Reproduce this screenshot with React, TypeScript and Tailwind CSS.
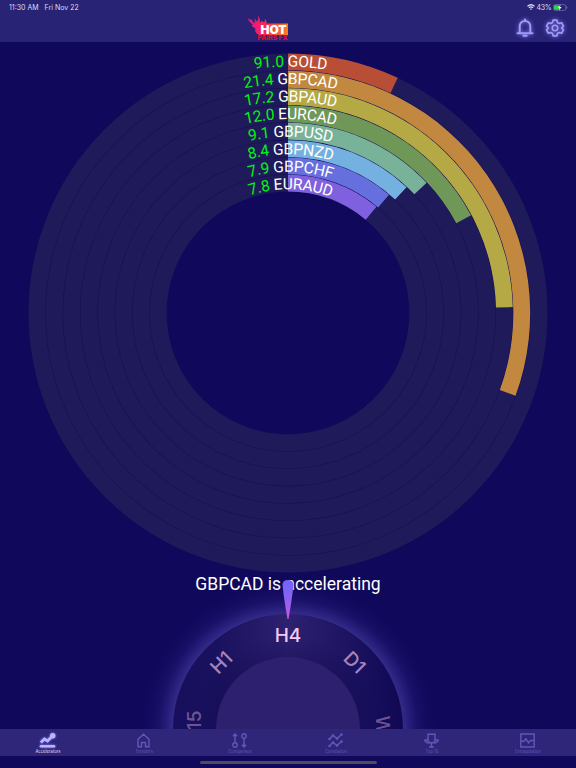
import type { ReactNode } from "react";

type Pair = { name: string; value: string; angle: number; color: string };

const pairs: Pair[] = [
  { name: "GOLD", value: "91.0", angle: 25, color: "#b94e36" },
  { name: "GBPCAD", value: "21.4", angle: 110, color: "#c2883f" },
  { name: "GBPAUD", value: "17.2", angle: 88.5, color: "#b5a945" },
  { name: "EURCAD", value: "12.0", angle: 61.9, color: "#6f9858" },
  { name: "GBPUSD", value: "9.1", angle: 46.8, color: "#78b298" },
  { name: "GBPNZD", value: "8.4", angle: 43.3, color: "#74b1e0" },
  { name: "GBPCHF", value: "7.9", angle: 40.5, color: "#666fde" },
  { name: "EURAUD", value: "7.8", angle: 39.8, color: "#7f60de" },
];

const C = 260;
const OUTER = 259.5;
const STEP = 17.33;
const THICK = 16.8;

// arc band starting from 12 o'clock, clockwise
function band(r1: number, r2: number, deg: number) {
  const a = (deg * Math.PI) / 180;
  const s = Math.sin(a);
  const c = Math.cos(a);
  return `M${C} ${C - r1}A${r1} ${r1} 0 0 1 ${C + r1 * s} ${C - r1 * c}L${C + r2 * s} ${C - r2 * c}A${r2} ${r2} 0 0 0 ${C} ${C - r2}Z`;
}

function RadialChart() {
  return (
    <svg width="520" height="520" viewBox="0 0 520 520" className="block shrink-0">
      <circle cx={C} cy={C} r={190.2} fill="none" stroke="#170f59" strokeWidth="138" />
      {pairs.map((p, i) => {
        const r = OUTER - i * STEP;
        return (
          <g key={p.name}>
            <circle cx={C} cy={C} r={r - THICK / 2} fill="none" stroke="#1f1a59" strokeWidth={THICK} />
            <path d={band(r, r - THICK, p.angle)} fill={p.color} />
          </g>
        );
      })}
      {pairs.map((p, i) => {
        const r = OUTER - i * (STEP + 0.2) - 13.1;
        // labels sit slightly past 12 o'clock
        const t = 2.6 / r;
        const dx = r * Math.cos(t);
        const dy = r * Math.sin(t);
        return (
          <g key={p.name}>
            <path id={`arc-${p.name}`} d={`M${C - dx} ${C - dy}A${r} ${r} 0 0 1 ${C + dx} ${C + dy}`} fill="none" />
            <text className="font-['Roboto',sans-serif] text-[15.600px] tracking-[-0.220px]" textAnchor="middle" fill="#fff">
              <textPath href={`#arc-${p.name}`} startOffset="50%">
                <tspan fill="#00f514">{p.value}</tspan> {p.name}
              </textPath>
            </text>
          </g>
        );
      })}
    </svg>
  );
}

const frames = [
  { label: "M15", rot: -90, opacity: 0.4 },
  { label: "H1", rot: -45, opacity: 0.65 },
  { label: "H4", rot: 0, opacity: 1 },
  { label: "D1", rot: 45, opacity: 0.65 },
  { label: "W1", rot: 90, opacity: 0.4 },
];

function Dial() {
  return (
    <svg width="230" height="230" viewBox="0 0 230 230" className="block shrink-0 overflow-visible">
      <defs>
        <linearGradient id="rim">
          <stop offset="0" stopColor="#170e5c" />
          <stop offset="0.2" stopColor="#1a115f" />
          <stop offset="0.5" stopColor="#2d2170" />
          <stop offset="0.8" stopColor="#1a115f" />
          <stop offset="1" stopColor="#100853" />
        </linearGradient>
        <radialGradient id="innerShade" gradientUnits="userSpaceOnUse" cx="115" cy="115" r="94">
          <stop offset="0.76" stopColor="#130b50" stopOpacity="0.38" />
          <stop offset="1" stopColor="#130b50" stopOpacity="0" />
        </radialGradient>
        <radialGradient id="halo" gradientUnits="userSpaceOnUse" cx="115" cy="115" r="148">
          <stop offset="0.775" stopColor="#41379a" stopOpacity="0.75" />
          <stop offset="0.82" stopColor="#3a3094" stopOpacity="0.55" />
          <stop offset="0.88" stopColor="#30278a" stopOpacity="0.26" />
          <stop offset="0.94" stopColor="#30278a" stopOpacity="0.08" />
          <stop offset="1" stopColor="#30278a" stopOpacity="0" />
        </radialGradient>
        <linearGradient id="needle" x1="0" y1="0" x2="0" y2="1">
          <stop offset="0" stopColor="#6b65fa" />
          <stop offset="0.5" stopColor="#8d62ee" />
          <stop offset="1" stopColor="#cf55e6" />
        </linearGradient>
      </defs>
      <circle cx="115" cy="115" r="148" fill="url(#halo)" />
      <circle cx="115" cy="115" r="115" fill="url(#rim)" />
      <circle cx="115" cy="115" r="94" fill="url(#innerShade)" />
      <circle cx="115" cy="115" r="72" fill="#2d206f" />
      {frames.map((f) => (
        <text
          key={f.label}
          x="115"
          y="27.500"
          transform={`rotate(${f.rot} 115 115)`}
          textAnchor="middle"
          fill="#f3c9f2"
          fillOpacity={f.opacity}
          className="font-['Inter',sans-serif] text-[19px] font-medium"
        >
          {f.label}
        </text>
      ))}
      <path d="M109.500 -29Q109.500 -34 115 -34Q120.500 -34 120.500 -29Q119.500 -18 115.500 5H114.500Q110.500 -18 109.500 -29Z" fill="url(#needle)" />
    </svg>
  );
}

function Logo() {
  return (
    <svg width="42" height="28" viewBox="0 0 42 28" className="block">
      <defs>
        <linearGradient id="flame">
          <stop offset="0" stopColor="#ec1283" />
          <stop offset="0.4" stopColor="#f5265a" />
          <stop offset="1" stopColor="#f58220" />
        </linearGradient>
      </defs>
      <path
        d="M42 9.500V21H13C9.500 19.500 8.500 17 9.500 14.500Q8.500 14.500 7.500 13Q6.500 13.200 5.500 11.500Q6.800 11.300 6.500 10Q4.500 9.500 4 8Q2.200 7 2.200 4Q3.500 5.800 5.500 5.600Q6.500 7.800 8.500 9Q9.500 6.800 8 4.500Q10 5.200 10.500 7.500Q13.500 5.500 11.500 1.500Q15 4 13.500 8.500Q15 8.500 15.500 6.500Q17 8.500 18.500 7.800Q19.500 6.500 18.500 4.500Q21 6.500 20.500 9.500Z"
        fill="url(#flame)"
      />
      <text x="14.500" y="19.500" textLength="26" lengthAdjust="spacingAndGlyphs" fill="#fff" className="font-['Inter',sans-serif] text-[11.800px] font-black">
        HOT
      </text>
      <text x="11.500" y="26.400" textLength="30" lengthAdjust="spacingAndGlyphs" fill="#ee0e24" className="font-['Inter',sans-serif] text-[5.800px] font-extrabold">
        PAIRS FX
      </text>
    </svg>
  );
}

function Header() {
  return (
    <header className="h-[42px] shrink-0 bg-[#292376]">
      <div className="flex h-[14px] items-center justify-between pr-[8px] pl-[9px] font-['Inter',sans-serif] text-[7px] leading-none text-[#dddcf0]">
        <div className="flex gap-[6px]">
          <span>11:30 AM</span>
          <span>Fri Nov 22</span>
        </div>
        <div className="flex items-center gap-[1.500px]">
          <svg width="8" height="6" viewBox="0 0 8 6" fill="none" stroke="currentColor" strokeWidth="1.300">
            <path d="M.5 2.300Q4-.8 7.500 2.300M1.900 3.800Q4 2 6.100 3.800M3.300 5.200H4.700" />
          </svg>
          <span className="tracking-[-0.200px]">43%</span>
          <svg width="15" height="7" viewBox="0 0 15 7">
            <rect x=".4" y=".6" width="12.400" height="5.800" rx="1.800" fill="none" stroke="#7975a8" strokeWidth=".7" />
            <rect x="1" y="1.200" width="5.500" height="4.600" rx="1" fill="#34d04c" />
            <path d="M7.500 .7L4.900 3.900H6.400L5.900 6.400L8.600 3.100H7Z" fill="#fff" />
            <path d="M13.700 2.500V4.500" stroke="#7975a8" />
          </svg>
        </div>
      </div>
      <div className="grid h-[28px] grid-cols-2 items-center">
        <div className="justify-self-end">
          <Logo />
        </div>
        <div className="flex items-center gap-[9.500px] justify-self-end pr-[11.500px] text-[#a09bf2]">
          <svg width="20" height="20" viewBox="0 0 20 20" fill="none" stroke="currentColor" strokeWidth="2" className="drop-shadow-[0_0_2px_#8078f0]">
            <path d="M4.700 15V8.600C4.700 5.300 7 3 10 3S15.300 5.300 15.300 8.600V15" />
            <path d="M2.500 15.300H17.500M10 1.500V3M8.300 17.800H11.700" strokeLinecap="round" />
          </svg>
          <svg width="20" height="20" viewBox="0 0 24 24" fill="none" stroke="currentColor" strokeWidth="2" strokeLinejoin="round" className="drop-shadow-[0_0_2px_#8078f0]">
            <path d="M9.700 2.500H14.300L15 5.400L17 6.600L19.900 5.700L22.200 9.800L20 11.900V12.100L22.200 14.200L19.900 18.300L17 17.400L15 18.600L14.300 21.500H9.700L9 18.600L7 17.400L4.100 18.300L1.800 14.200L4 12.100V11.900L1.800 9.800L4.100 5.700L7 6.600L9 5.400Z" />
            <circle cx="12" cy="12" r="3.300" />
          </svg>
        </div>
      </div>
    </header>
  );
}

const tabs: { label: string; icon: ReactNode }[] = [
  {
    label: "Accelerators",
    icon: (
      <>
        <path d="M.8 9.500L4.500 6L7.500 8L12.500 2.800" strokeWidth="2.600" />
        <circle cx="12.700" cy="2.700" r="2.700" fill="currentColor" stroke="none" />
        <path d="M1 13.300H14" strokeWidth="2.600" strokeLinecap="round" />
      </>
    ),
  },
  {
    label: "Trenders",
    icon: <path d="M2 6.200L7.500 1.200L13 6.200V13.800H9.500V9.500H5.500V13.800H2Z" />,
  },
  {
    label: "Comparison",
    icon: (
      <>
        <path d="M3 9.500V1.500M1 3.300L3 1L5 3.300M12 5.500V13.500M10 11.700L12 14L14 11.700" />
        <circle cx="3" cy="12" r="2.200" />
        <circle cx="12" cy="3" r="2.200" />
      </>
    ),
  },
  {
    label: "Correlation",
    icon: (
      <>
        <path d="M1.500 6L5 2.500L9 5.500L13.500 1.500M1.500 13L5 9.500L9 12.500L13.500 8.500" />
        <path d="M1.500 6H1.510M13.500 1.500H13.510M5 2.500H5.010M9 5.500H9.010M1.500 13H1.510M13.500 8.500H13.510M5 9.500H5.010M9 12.500H9.010" strokeWidth="2.600" strokeLinecap="round" />
      </>
    ),
  },
  {
    label: "Top 10",
    icon: (
      <>
        <path d="M4 1.200H11V7.500L9.500 9.800H5.500L4 7.500Z" />
        <path d="M4 7H1V8.200L3.200 9.800H5M11 7H14V8.200L11.800 9.800H10M7.500 10V13.500M5 14H10" />
      </>
    ),
  },
  {
    label: "Extrapolation",
    icon: (
      <>
        <path d="M.8 1H14.200V14H.8Z" />
        <path d="M1 8.300H4L6 5.800L8.500 9.800L10.500 7.500H14" />
      </>
    ),
  },
];

function TabBar() {
  return (
    <nav className="grid h-[27px] shrink-0 grid-cols-6 bg-[#2f267a]">
      {tabs.map((t, i) => (
        <div key={t.label} className={`flex flex-col items-center pt-[4px] ${i === 0 ? "text-[#b9b4ff]" : "text-[#6256ba]"}`}>
          <svg
            width="16"
            height="15"
            viewBox="0 0 16 15"
            fill="none"
            stroke="currentColor"
            strokeWidth="1.400"
            className={i === 0 ? "block overflow-visible drop-shadow-[0_0_1px_#8f88ff]" : "block"}
          >
            {t.icon}
          </svg>
          <span className={`mt-[1px] font-['Inter',sans-serif] text-[4.200px] leading-[5px] ${i === 0 ? "text-[#e2dffa]" : ""}`}>{t.label}</span>
        </div>
      ))}
    </nav>
  );
}

export default function App() {
  return (
    <div className="flex h-[768px] w-[576px] flex-col overflow-hidden bg-[#10085b]">
      <Header />
      <main className="flex min-h-0 flex-1 flex-col items-center overflow-hidden pt-[10.500px]">
        <RadialChart />
        <p className="-mt-px h-[24px] shrink-0 font-['Roboto',sans-serif] text-[17.500px] leading-[24px] whitespace-nowrap text-white">GBPCAD is accelerating</p>
        <div className="mt-[18.500px] shrink-0">
          <Dial />
        </div>
      </main>
      <TabBar />
      <div className="flex h-[12px] shrink-0 items-center justify-center">
        <div className="h-[3px] w-[177px] rounded-full bg-[#504b57]" />
      </div>
    </div>
  );
}
